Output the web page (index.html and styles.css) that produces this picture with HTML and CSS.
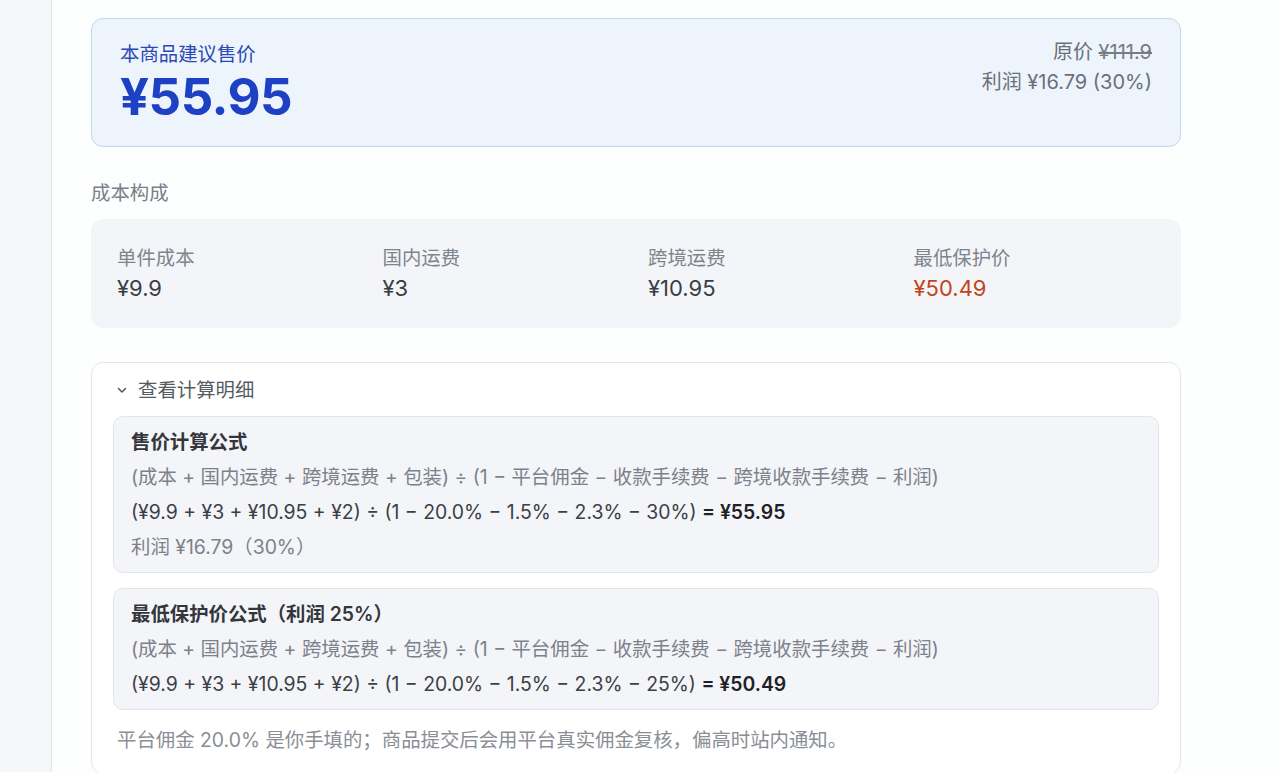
FILE: index.html
```html
<!DOCTYPE html>
<html lang="zh-CN">
<head>
    <meta charset="UTF-8">
    <meta name="viewport" content="width=device-width, initial-scale=1.0">
    <title>建议售价</title>
    <link rel="stylesheet" href="styles.css">
</head>
<body>
    <div class="sidebar"></div>
    <div class="main">
        <div class="hero">
            <div class="hero-left">
                <div class="hero-label">本商品建议售价</div>
                <div class="hero-price">¥55.95</div>
            </div>
            <div class="hero-right">
                <div class="orig">原价 <s>¥111.9</s></div>
                <div class="profit">利润 ¥16.79 (30%)</div>
            </div>
        </div>

        <div class="section-title">成本构成</div>
        <div class="cost-box">
            <div class="cost-item">
                <div class="cost-label">单件成本</div>
                <div class="cost-value">¥9.9</div>
            </div>
            <div class="cost-item">
                <div class="cost-label">国内运费</div>
                <div class="cost-value">¥3</div>
            </div>
            <div class="cost-item">
                <div class="cost-label">跨境运费</div>
                <div class="cost-value">¥10.95</div>
            </div>
            <div class="cost-item">
                <div class="cost-label">最低保护价</div>
                <div class="cost-value warn">¥50.49</div>
            </div>
        </div>

        <div class="details">
            <div class="details-summary">
                <svg class="chevron" width="12" height="12" viewBox="0 0 12 12"><path d="M2.5 4.5 L6 8 L9.5 4.5" fill="none" stroke="#555" stroke-width="1.5" stroke-linecap="round" stroke-linejoin="round"/></svg>
                <span>查看计算明细</span>
            </div>
            <div class="formula-card">
                <div class="formula-title">售价计算公式</div>
                <div class="formula-line muted">(成本 + 国内运费 + 跨境运费 + 包装) ÷ (1 − 平台佣金 − 收款手续费 − 跨境收款手续费 − 利润)</div>
                <div class="formula-line">(¥9.9 + ¥3 + ¥10.95 + ¥2) ÷ (1 − 20.0% − 1.5% − 2.3% − 30%) <b>= ¥55.95</b></div>
                <div class="formula-line muted">利润 ¥16.79（30%）</div>
            </div>
            <div class="formula-card">
                <div class="formula-title">最低保护价公式（利润 25%）</div>
                <div class="formula-line muted">(成本 + 国内运费 + 跨境运费 + 包装) ÷ (1 − 平台佣金 − 收款手续费 − 跨境收款手续费 − 利润)</div>
                <div class="formula-line">(¥9.9 + ¥3 + ¥10.95 + ¥2) ÷ (1 − 20.0% − 1.5% − 2.3% − 25%) <b>= ¥50.49</b></div>
            </div>
            <div class="note">平台佣金 20.0% 是你手填的；商品提交后会用平台真实佣金复核，偏高时站内通知。</div>
        </div>
    </div>
</body>
</html>
```

FILE: styles.css
```css
body {
    font-family: Inter, "Noto Sans CJK SC", sans-serif;
    margin: 0;
    padding: 0;
    display: flex;
    height: 100vh;
    overflow: hidden;
    background-color: #fdfefe;
    color: #333;
    font-size: 19.4px;
}

.sidebar {
    width: 51px;
    flex-shrink: 0;
    background-color: #f6f7f9;
    border-right: 1px solid #e6e7eb;
}

.main {
    flex: 1;
    padding: 18px 99px 0 39px;
}

.hero {
    display: flex;
    justify-content: space-between;
    background-color: #edf4fc;
    border: 1px solid #bfd6f0;
    border-radius: 12px;
    padding: 22px 28px 19px;
}

.hero-label {
    color: #2a49b3;
    line-height: 26px;
}

.hero-price {
    color: #1d40c4;
    font-size: 51px;
    font-weight: 700;
    line-height: 60px;
    letter-spacing: -0.5px;
}

.hero-right {
    text-align: right;
    color: #6b7079;
    font-size: 20px;
    margin-top: -2px;
}

.orig, .profit {
    line-height: 26px;
}

.profit {
    margin-top: 4px;
}

.orig s {
    color: #777b83;
}

.section-title {
    color: #7b7f87;
    line-height: 26px;
    margin-top: 33px;
}

.cost-box {
    margin-top: 13px;
    background-color: #f4f5f9;
    border-radius: 12px;
    padding: 26px 26px 27px;
    display: grid;
    grid-template-columns: repeat(4, 1fr);
    column-gap: 24px;
}

.cost-label {
    color: #80848c;
    line-height: 26px;
}

.cost-value {
    color: #3a3d44;
    font-size: 22px;
    line-height: 26px;
    margin-top: 4px;
}

.cost-value.warn {
    color: #c2441a;
}

.details {
    margin-top: 34px;
    border: 1px solid #e4e6ea;
    border-radius: 12px;
    background-color: #ffffff;
    padding: 14px 21px 20px;
}

.details-summary {
    display: flex;
    align-items: center;
    color: #555a62;
    line-height: 26px;
    padding-left: 3px;
}

.chevron {
    margin-right: 10px;
}

.formula-card {
    margin-top: 13px;
    background-color: #f4f5f9;
    border: 1px solid #e2e4e9;
    border-radius: 10px;
    padding: 12px 17px 12px;
}

.formula-card + .formula-card {
    margin-top: 15px;
}

.formula-title {
    font-weight: 600;
    color: #33363c;
    line-height: 26px;
}

.formula-line {
    line-height: 26px;
    margin-top: 9px;
    color: #3c3f45;
}

.formula-line.muted {
    color: #7d8189;
}

.formula-line b {
    font-weight: 600;
    color: #1f2126;
}

.note {
    margin-top: 17px;
    padding-left: 4px;
    color: #8a8e95;
    line-height: 26px;
}
```
